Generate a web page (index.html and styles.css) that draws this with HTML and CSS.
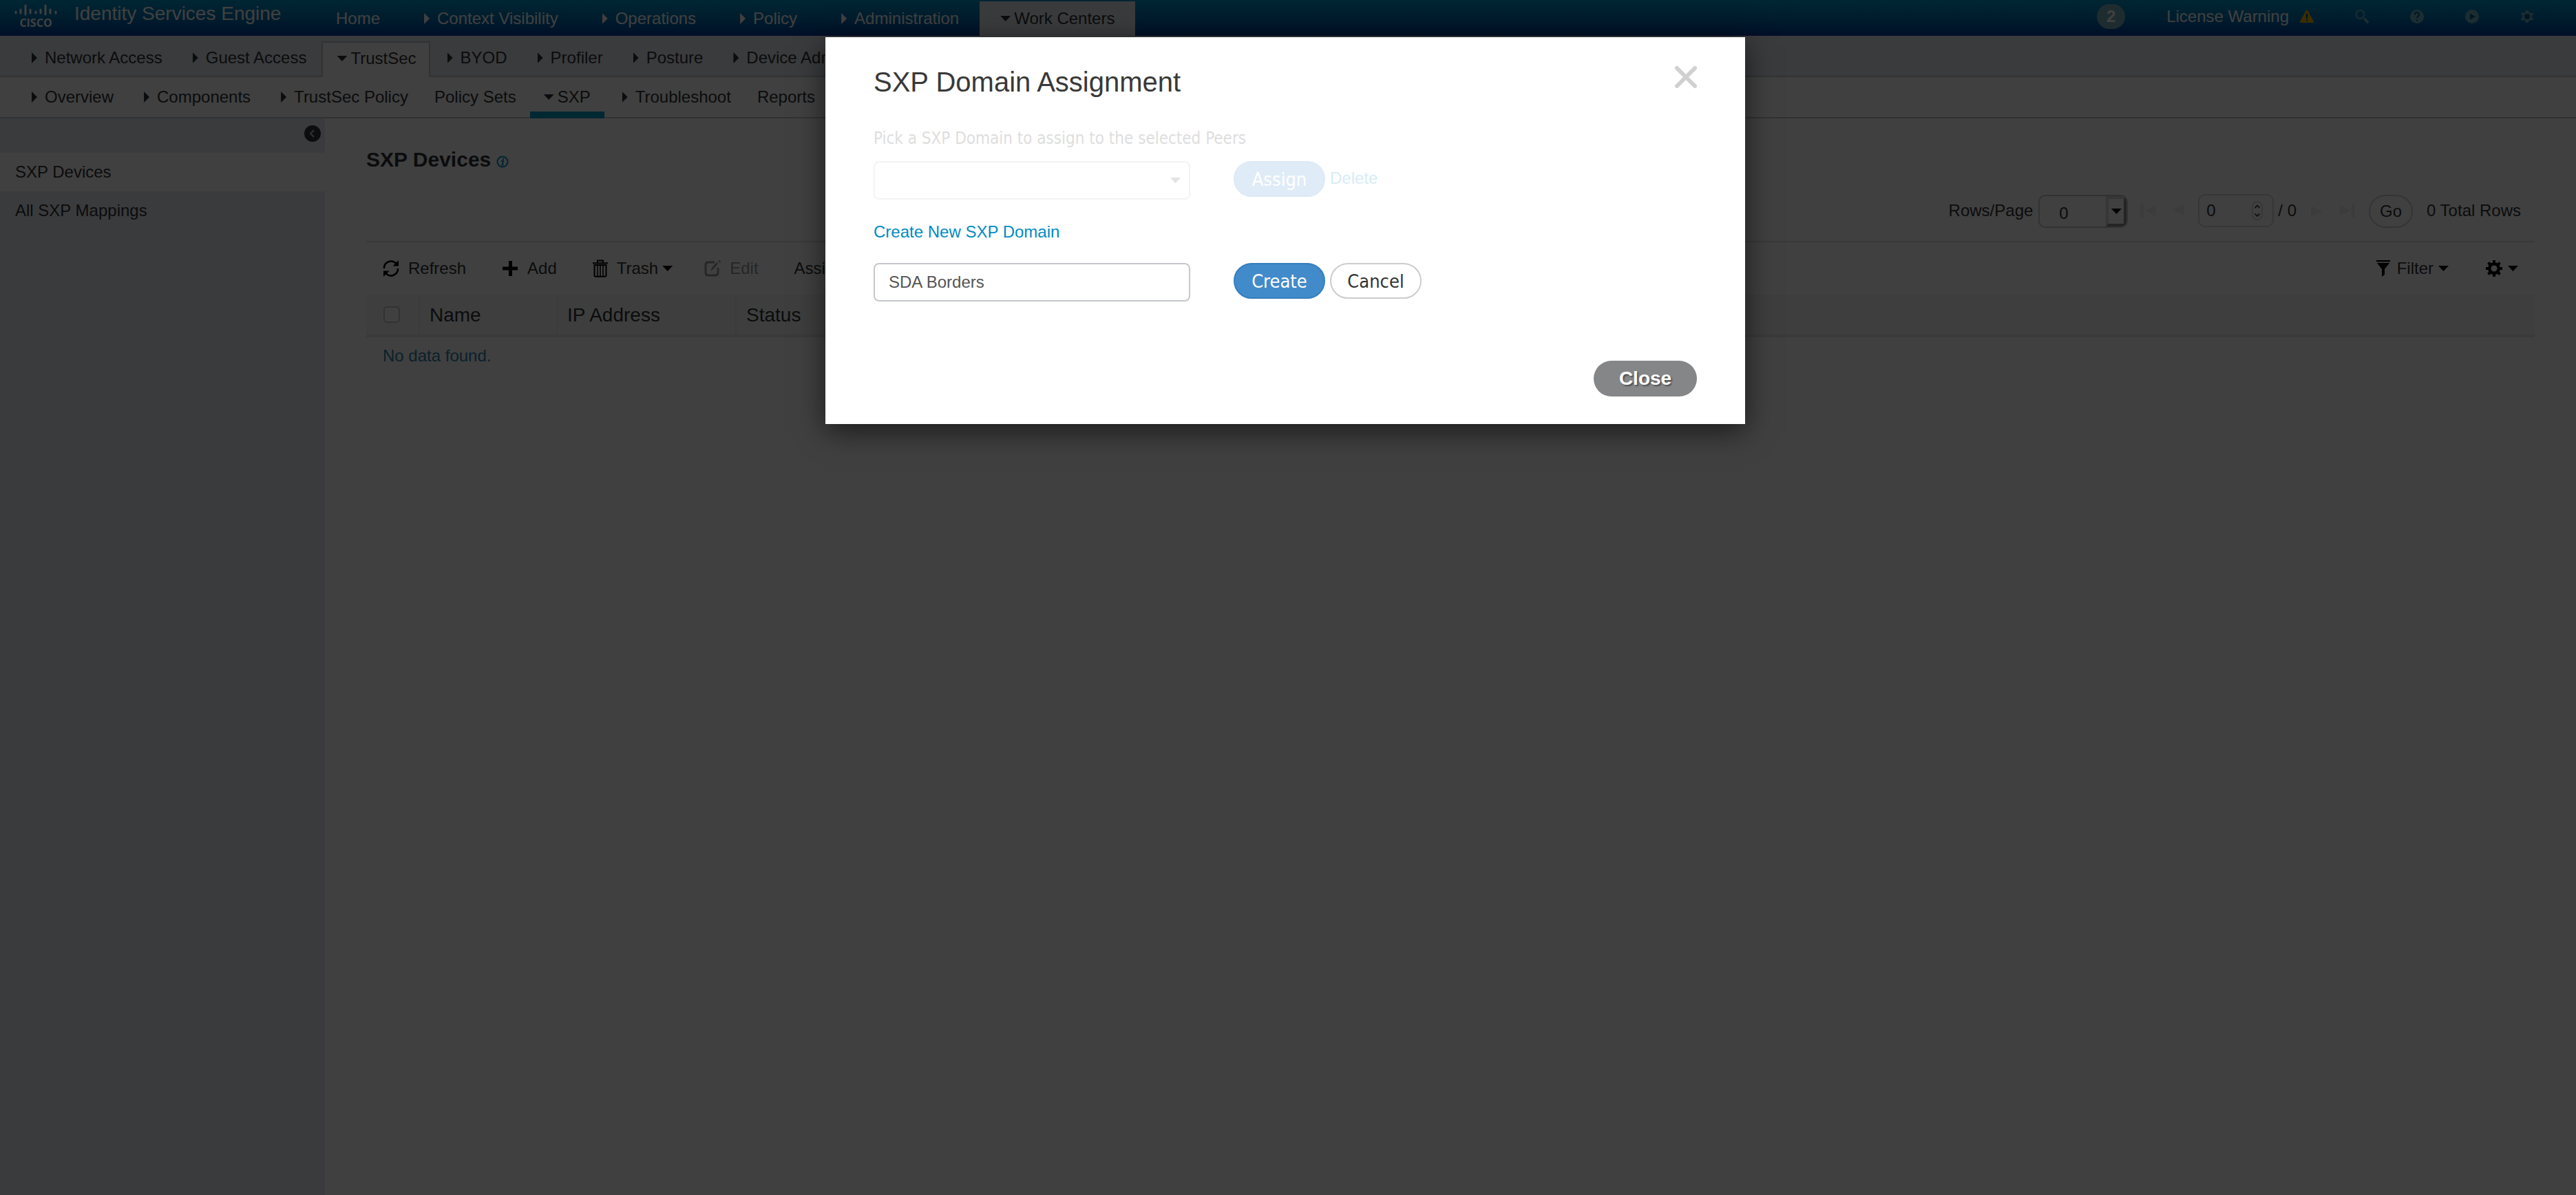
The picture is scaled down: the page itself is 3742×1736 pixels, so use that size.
FILE: index.html
```html
<!DOCTYPE html>
<html lang="en">
<head>
<meta charset="utf-8">
<title>Identity Services Engine</title>
<link rel="stylesheet" href="styles.css">
</head>
<body>
<div class="app">
  <header class="topbar">
    <div class="logo">
      <svg viewBox="0 0 62 18" aria-hidden="true"><path d="M2 11v2M9 8v5M16 2v13M23 8v5M31 11v2M38 8v5M45 2v13M52 8v5M60 11v2" stroke="currentColor" stroke-width="3" stroke-linecap="round" fill="none"/></svg>
      <span class="wordmark">CISCO</span>
    </div>
    <h1 class="product">Identity Services Engine</h1>
    <nav class="mainnav">
      <a href="#" class="item">Home</a>
      <a href="#" class="item"><i class="arrow"></i>Context Visibility</a>
      <a href="#" class="item"><i class="arrow"></i>Operations</a>
      <a href="#" class="item"><i class="arrow"></i>Policy</a>
      <a href="#" class="item"><i class="arrow"></i>Administration</a>
      <a href="#" class="item current"><i class="caret"></i>Work Centers</a>
    </nav>
    <div class="tools">
      <span class="count">2</span>
      <a href="#" class="license">License Warning
        <svg class="ic20" viewBox="0 0 20 18"><path fill="#f0b400" d="M10 0c1 0 1.500.6 2 1.600l7.600 14c.8 1.500.2 2.400-1.400 2.400H1.800C.2 18-.4 17.100.4 15.600L8 1.600C8.500.6 9 0 10 0z"/><path stroke="#003c78" stroke-width="2.200" d="M10 5v6.500M10 13.500v2.200"/></svg></a>
      <button class="icon" aria-label="Search"><svg class="ic20" viewBox="0 0 20 20"><circle cx="7.500" cy="7" r="6" fill="none" stroke="currentColor" stroke-width="2"/><path d="M14.500 14l3.500 4" stroke="currentColor" stroke-width="4" stroke-linecap="round"/></svg></button>
      <button class="icon" aria-label="Help"><svg class="ic20" viewBox="0 0 20 20"><circle cx="10" cy="10" r="10" fill="currentColor"/><path d="M6.800 7.500c0-4.500 6.400-4.500 6.400-.5 0 2.500-3.200 2.800-3.200 5.500M10 14.800v2" stroke="#00588c" stroke-width="2" fill="none"/></svg></button>
      <button class="icon" aria-label="Run"><svg class="ic20" viewBox="0 0 20 20"><circle cx="10" cy="10" r="10" fill="currentColor"/><path d="M7 5.500l8 4.500-8 4.500z" fill="#00588c"/></svg></button>
      <button class="icon" aria-label="Settings"><svg class="ic20" viewBox="0 0 20 20"><circle cx="10" cy="10" r="5.500" fill="none" stroke="currentColor" stroke-width="3"/><path d="M10 5V1M10 15v4M5.500 7.500L1.700 5.500M14.500 7.500l3.800-2M5.500 12.500l-3.800 2M14.500 12.500l3.800 2" stroke="currentColor" stroke-width="3.500"/><circle cx="10" cy="10" r="4" fill="#00588c"/></svg></button>
    </div>
  </header>

  <nav class="subnav tabs">
    <a href="#" class="item"><i class="arrow"></i>Network Access</a>
    <a href="#" class="item"><i class="arrow"></i>Guest Access</a>
    <a href="#" class="item current"><i class="caret"></i>TrustSec</a>
    <a href="#" class="item"><i class="arrow"></i>BYOD</a>
    <a href="#" class="item"><i class="arrow"></i>Profiler</a>
    <a href="#" class="item"><i class="arrow"></i>Posture</a>
    <a href="#" class="item"><i class="arrow"></i>Device Administration</a>
  </nav>
  <nav class="subnav pages">
    <a href="#" class="item"><i class="arrow"></i>Overview</a>
    <a href="#" class="item"><i class="arrow"></i>Components</a>
    <a href="#" class="item"><i class="arrow"></i>TrustSec Policy</a>
    <a href="#" class="item plain">Policy Sets</a>
    <a href="#" class="item current"><i class="caret"></i>SXP</a>
    <a href="#" class="item"><i class="arrow"></i>Troubleshoot</a>
    <a href="#" class="item plain">Reports</a>
  </nav>

  <div class="body">
    <aside class="side">
      <div class="side-head">
        <button class="collapse" aria-label="Collapse"><svg viewBox="0 0 24 24"><circle cx="12" cy="12" r="12" fill="#34373c"/><path d="M14 7l-5 5 5 5" fill="none" stroke="#c4c7cc" stroke-width="2"/></svg></button>
      </div>
      <a href="#" class="side-item selected">SXP Devices</a>
      <a href="#" class="side-item">All SXP Mappings</a>
    </aside>

    <main class="main">
      <h2 class="heading">SXP Devices
        <svg class="info" viewBox="0 0 18 18"><circle cx="9" cy="9" r="7.500" fill="none" stroke="currentColor" stroke-width="2"/><path d="M7 8h3l-1.500 5.500h2M10 4v2.500" fill="none" stroke="currentColor" stroke-width="2"/></svg></h2>

      <div class="pager">
        <label for="rows">Rows/Page</label>
        <span class="rows"><input id="rows" type="text" value="0"><button class="drop" aria-label="Open list"><i class="caret"></i></button></span>
        <button class="step first" aria-label="First"><svg viewBox="0 0 22 20"><path d="M0 0h5v20H0zM22 2v16L7 10z"/></svg></button>
        <button class="step prev" aria-label="Previous"><svg viewBox="0 0 18 20"><path d="M18 1v16L1 9z"/></svg></button>
        <span class="page"><input type="text" value="0" aria-label="Page"><svg viewBox="0 0 16 28"><rect x="1" y="1" width="14" height="26" rx="7" fill="none" stroke="#d0d0d0" stroke-width="1.500"/><path d="M4.500 10L8 6.500l3.500 3.500M4.500 18.500L8 22l3.500-3.500" fill="none" stroke="#444" stroke-width="1.800"/></svg></span>
        <span class="of">/ 0</span>
        <button class="step next" aria-label="Next"><svg viewBox="0 0 18 20"><path d="M0 3v16l17-8z"/></svg></button>
        <button class="step last" aria-label="Last"><svg viewBox="0 0 22 20"><path d="M17 0h5v20h-5zM0 2v16l15-8z"/></svg></button>
        <button class="go">Go</button>
        <span class="total">0 Total Rows</span>
      </div>

      <div class="toolbar">
        <button class="tool"><svg viewBox="0 0 24 24"><path d="M2 12A10 10 0 0 1 19.500 5M22 12A10 10 0 0 1 4.500 19" fill="none" stroke="#000" stroke-width="2.600"/><path d="M23 0v8.500h-8.500zM1 24v-8.500h8.500z"/></svg>Refresh</button>
        <button class="tool"><svg viewBox="0 0 24 24"><path d="M10 1h5v8.500h8v5h-8V23h-5v-8.500H1v-5h9z"/></svg>Add</button>
        <button class="tool trash"><svg viewBox="0 0 22 26"><path d="M0 5.200h22M7 4.500V1.500h8v3" fill="none" stroke="#000" stroke-width="2"/><path d="M2.500 8v15c0 1 .5 1.800 1.500 1.800h14c1 0 1.500-.8 1.500-1.800V8z" fill="none" stroke="#000" stroke-width="2"/><path d="M7 8v16M11 8v16M15 8v16" stroke="#000" stroke-width="1.500"/></svg>Trash<i class="caret"></i></button>
        <button class="tool off"><svg viewBox="0 0 24 24"><path d="M15 3H6C3.500 3 2 4.500 2 7v11c0 2.500 1.500 4 4 4h10c2.500 0 4-1.500 4-4v-7" fill="none" stroke="#999" stroke-width="3"/><path d="M9 16l2-5 7-8 2 2-7 8zM20 1l2-1 2 2-1 2z" fill="#999"/></svg>Edit</button>
        <button class="tool text">Assign SXP Domain<i class="caret"></i></button>
        <span class="grow"></span>
        <button class="tool filter"><svg viewBox="0 0 20 24"><path d="M0 0h20v2.200H0zM1 4h18l-7 9v8l-4 3V13z"/></svg>Filter<i class="caret"></i></button>
        <button class="tool" aria-label="Table settings"><svg viewBox="0 0 24 24"><circle cx="12" cy="12" r="6.800" fill="none" stroke="#000" stroke-width="4.500"/><path d="M12 0v4M12 20v4M0 12h4M20 12h4M3.500 3.500l3 3M17.500 17.500l3 3M20.500 3.500l-3 3M6.500 17.500l-3 3" stroke="#000" stroke-width="4"/></svg><i class="caret"></i></button>
      </div>

      <table class="grid">
        <thead>
          <tr>
            <th class="c-check"><input type="checkbox" aria-label="Select all"></th>
            <th class="c-name">Name</th>
            <th class="c-ip">IP Address</th>
            <th class="c-status">Status</th>
          </tr>
        </thead>
        <tbody>
          <tr><td colspan="4">No data found.</td></tr>
        </tbody>
      </table>
    </main>
  </div>
</div>

<div class="overlay">
  <section class="dialog" role="dialog" aria-labelledby="dialog-title">
    <header class="dialog-head">
      <h2 id="dialog-title">SXP Domain Assignment</h2>
      <button class="dismiss" aria-label="Dismiss"><svg viewBox="0 0 32 32"><path d="M3 3l26 26M29 3L3 29" stroke="#d0d0d0" stroke-width="6" stroke-linecap="round"/></svg></button>
    </header>
    <div class="assign">
      <label for="domain">Pick a SXP Domain to assign to the selected Peers</label>
      <div class="row">
        <span class="picker"><select id="domain" class="field" disabled><option></option></select><i class="caret"></i></span>
        <span class="actions"><button class="btn primary" disabled>Assign</button><a href="#" class="link">Delete</a></span>
      </div>
    </div>
    <label class="create-label" for="newdomain">Create New SXP Domain</label>
    <div class="row">
      <input id="newdomain" class="field" type="text" value="SDA Borders">
      <span class="actions"><button class="btn primary">Create</button><button class="btn">Cancel</button></span>
    </div>
    <footer class="dialog-foot"><button class="btn close">Close</button></footer>
  </section>
</div>
</body>
</html>
```
FILE: styles.css
```css
* { box-sizing: border-box; }

body {
  margin: 0;
  background: #fff;
  color: #2f3237;
  font: 24px/28px "Liberation Sans", Arial, sans-serif;
}

a { color: inherit; text-decoration: none; }
h1, h2 { margin: 0; }

button, input, select {
  margin: 0;
  padding: 0;
  border: 0;
  background: none;
  color: inherit;
  font: inherit;
}

svg { display: block; flex: none; }

.app {
  display: flex;
  flex-direction: column;
  min-height: 100vh;
}

.arrow {
  width: 8px;
  height: 16px;
  margin-right: 11px;
  background: currentColor;
  clip-path: polygon(0 0, 100% 50%, 0 100%);
}

.caret {
  flex: none;
  width: 15px;
  height: 8px;
  background: currentColor;
  clip-path: polygon(0 0, 100% 0, 50% 100%);
}

.item { display: flex; align-items: center; white-space: nowrap; }
.item .caret { margin-right: 5px; }

/* Top bar */
.topbar {
  display: flex;
  align-items: flex-start;
  height: 52px;
  background: linear-gradient(#0096c8, #0074b4 50%, #003c9c);
  color: #fff;
}

.logo {
  display: flex;
  flex-direction: column;
  align-items: center;
  width: 62px;
  margin: 6px 25px 0 21px;
}

.logo svg { width: 62px; height: 18px; }
.wordmark { font: bold 16px/18px "Open Sans", sans-serif; }

.product {
  width: 348px;
  padding-top: 2px;
  font-size: 28px;
  font-weight: normal;
  line-height: 36px;
}

.mainnav { display: flex; margin-top: 2px; }
.mainnav .item { height: 50px; padding: 0 32px; }

.mainnav .current {
  margin-left: -2px;
  padding: 0 30px;
  background: #e8ebf1;
  color: #2f3237;
}

.tools {
  display: flex;
  align-items: center;
  gap: 60px;
  margin-left: auto;
  height: 48px;
  padding-right: 61px;
}

.count {
  width: 41px;
  height: 36px;
  border-radius: 18px;
  background: #78b0be;
  font-weight: bold;
  line-height: 36px;
  text-align: center;
}

.license { display: flex; align-items: center; gap: 16px; }
.icon { color: #70b4c8; }
.ic20 { width: 20px; height: 20px; }

/* Second and third level navigation */
.subnav { display: flex; padding-left: 24px; height: 60px; border-bottom: 2px solid #c4c7cc; }
.subnav .item { padding: 0 22px; }
.tabs { padding-top: 8px; background: #e8ebf1; }
.tabs .item { height: 48px; }

.tabs .current {
  height: 52px;
  margin-right: 3px;
  padding: 0 18px 4px 20px;
  border: 2px solid #c4c7cc;
  border-bottom: 0;
  background: #fff;
}

.pages .plain { padding-left: 16px; }

.pages .current {
  height: 60px;
  margin: 0 4px 0 -2px;
  padding: 10px 20px 2px;
  border-bottom: 10px solid #00a0c8;
}

/* Side menu */
.body { display: flex; flex: 1; }
.side { width: 472px; background: #e8ebf1; }
.side-head { display: flex; justify-content: flex-end; height: 50px; padding: 10px 6px; }
.collapse { width: 24px; height: 24px; }
.side-item { display: block; padding: 14px 22px; }
.selected { background: #fff; }

/* Page content */
.main { flex: 1; padding: 42px 60px; }

.heading {
  display: flex;
  align-items: center;
  gap: 8px;
  font-size: 30px;
  line-height: 36px;
}

.info { width: 18px; height: 18px; margin-top: 6px; color: #0090c8; }

.pager {
  display: flex;
  align-items: center;
  height: 102px;
  padding: 12px 20px 0 0;
  justify-content: flex-end;
  border-bottom: 2px solid #e0e0e0;
}

.rows, .page {
  display: flex;
  height: 48px;
  border: 2px solid #d8d8d8;
  border-radius: 10px;
  overflow: hidden;
}

.rows { width: 130px; margin: 2px 18px 0 8px; border-color: #c8c8c8; }
.rows input { width: 96px; padding: 6px 0 0 28px; }

.drop {
  display: grid;
  place-items: center;
  width: 30px;
  border: 4px solid;
  border-color: #d8d8d8 #909090 #909090 #d8d8d8;
  color: #000;
}

.page { width: 110px; align-items: center; padding: 0 14px 0 10px; justify-content: space-between; }
.page input { width: 50px; }
.page svg { width: 16px; height: 28px; }
.step svg { width: 22px; height: 20px; fill: #ededed; }
.prev svg, .next svg { width: 18px; }
.prev { margin: 0 20px 0 24px; }
.next { margin: 0 24px 0 21px; }
.of { margin-left: 6px; }

.go {
  width: 64px;
  height: 48px;
  margin: 2px 20px 0;
  border: 2px solid #d0d0d0;
  border-radius: 24px;
}

.toolbar { display: flex; align-items: center; height: 76px; padding: 0 24px; }
.tool { display: flex; align-items: center; gap: 13px; margin-right: 52px; }
.tool svg { width: 24px; height: 24px; fill: #000; }
.tool .caret { margin-left: -7px; background: #000; }
.trash { margin-right: 46px; }
.trash svg { width: 22px; height: 26px; }
.off { color: #999; }
.grow { flex: 1; }
.tool.filter { gap: 10px; margin-right: 54px; }
.tool.filter svg { width: 20px; }
.filter .caret { margin-left: -3px; }
.tool:last-child { gap: 15px; margin-right: 0; }

.grid { width: 100%; border-collapse: separate; border-spacing: 0; table-layout: fixed; }

.grid th {
  height: 62px;
  padding: 2px 0 0 14px;
  border-left: 2px solid #eaeaea;
  border-bottom: 4px solid #e8e8e8;
  background: #f6f6f6;
  font-size: 28px;
  font-weight: normal;
  text-align: left;
}

.grid .c-check { width: 76px; padding: 0 0 0 25px; border-left: 0; }
.c-name { width: 200px; }
.c-ip { width: 260px; }

.grid input {
  display: block;
  appearance: none;
  width: 24px;
  height: 24px;
  border: 2px solid #c8c8c8;
  border-radius: 5px;
  background: #fff;
}

.grid td { height: 54px; padding: 0 24px; color: #2a83ab; }

/* Modal dialog */
.overlay {
  position: absolute;
  inset: 0;
  display: flex;
  justify-content: center;
  align-items: flex-start;
  padding: 54px 8px 0 0;
  background: rgba(0, 0, 0, .75);
}

.dialog {
  width: 1336px;
  padding: 38px 70px 40px;
  background: #fff;
  box-shadow: 0 10px 40px rgba(0, 0, 0, .6);
}

.dialog-head { display: flex; justify-content: space-between; }

.dialog-head h2 {
  color: #393939;
  font-size: 40px;
  font-weight: normal;
  line-height: 54px;
}

.dismiss { width: 32px; height: 32px; margin-top: 4px; }

.assign { margin-top: 40px; opacity: .16; }

.assign label {
  display: block;
  margin-bottom: 18px;
  color: #333;
  font-family: "DejaVu Sans Condensed", "DejaVu Sans", sans-serif;
  line-height: 30px;
}

.row { display: flex; gap: 63px; }

.field {
  width: 460px;
  height: 56px;
  padding: 0 20px;
  border: 2px solid #c4c7cc;
  border-radius: 8px;
  background: #fff;
  color: #555;
}

.picker { display: grid; }
.picker > * { grid-area: 1 / 1; }
.picker select { appearance: none; border-color: #a0a0a0; }
.picker .caret { align-self: center; justify-self: end; margin-right: 14px; background: #555; }

.actions { display: flex; gap: 7px; }

.btn {
  width: 133px;
  height: 52px;
  padding-top: 2px;
  border: 2px solid #ccc;
  border-radius: 26px;
  background: #fff;
  color: #333;
  font-family: "DejaVu Sans Condensed", "DejaVu Sans", sans-serif;
  font-size: 27px;
}

.primary { border-color: #357ebd; background: #428bca; color: #fff; }
.link { color: #0088d0; line-height: 50px; }
.create-label { display: block; margin: 33px 0 31px; color: #008cc4; }
.dialog-foot { display: flex; justify-content: flex-end; padding-top: 86px; }

.close {
  width: 150px;
  padding-top: 0;
  border: 0;
  background: #858688;
  color: #fff;
  font-family: "Liberation Sans", Arial, sans-serif;
  font-size: 28px;
  font-weight: bold;
  text-shadow: 2px 2px 2px rgba(0, 0, 0, .4);
}
```
